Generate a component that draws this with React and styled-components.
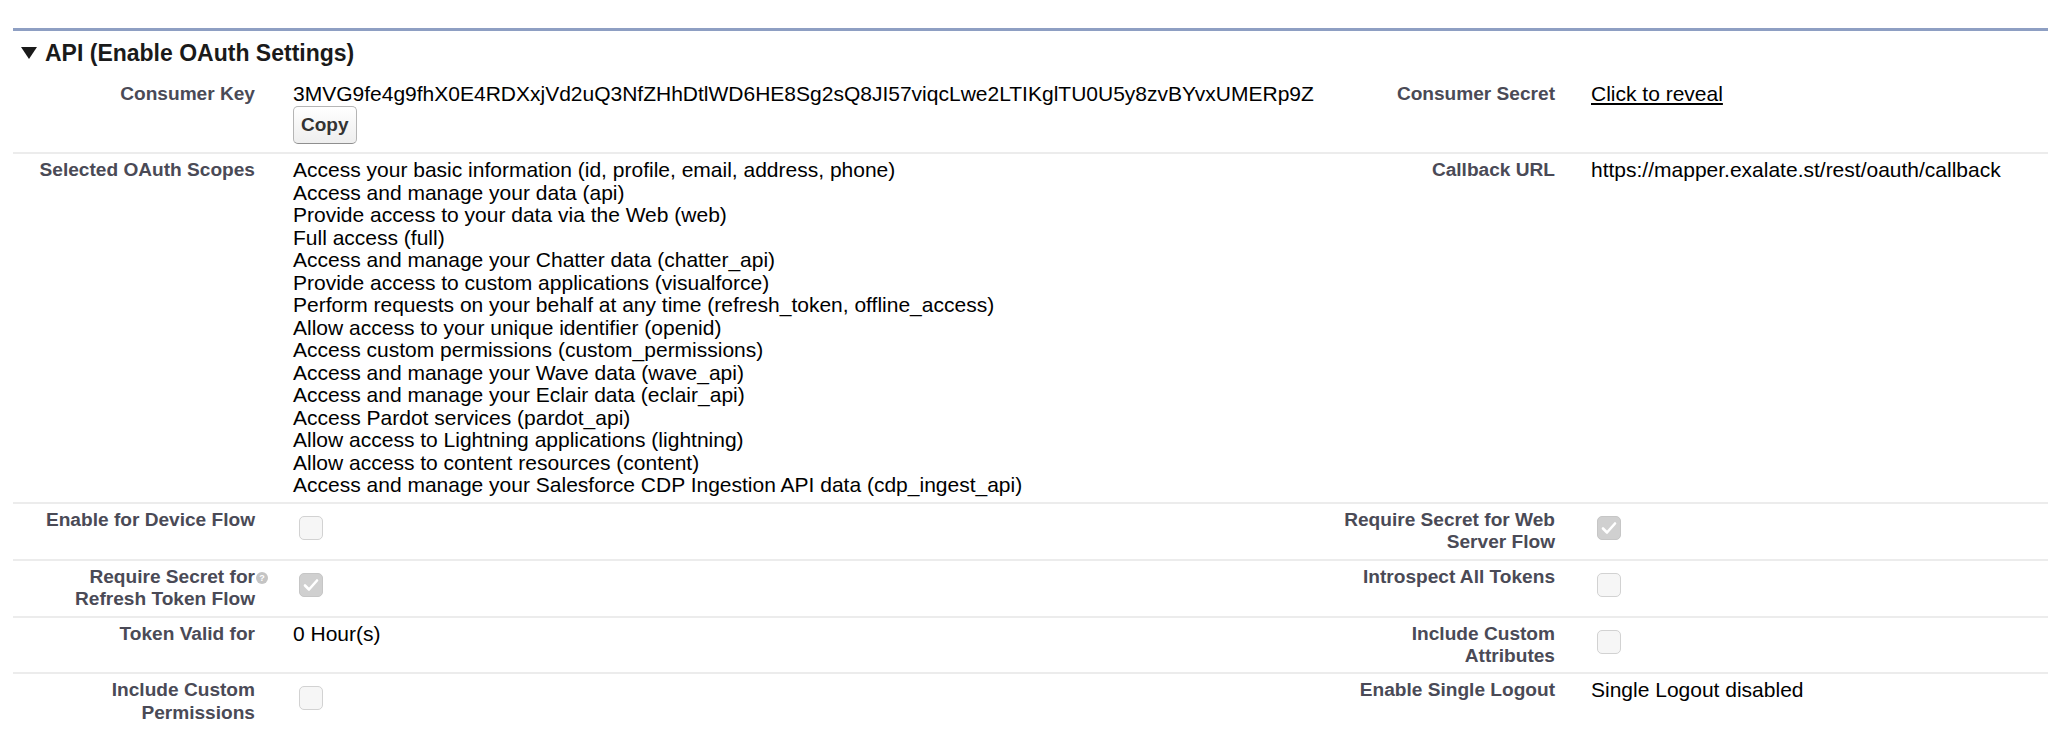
import React from 'react';
import styled, { createGlobalStyle } from 'styled-components';

const GlobalStyle = createGlobalStyle`
  body {
    margin: 0;
    background: #ffffff;
    font-family: "Liberation Sans", Arial, Helvetica, sans-serif;
  }
`;

const Page = styled.div`
  width: 2048px;
  height: 740px;
  padding: 28px 0 0 13px;
  box-sizing: border-box;
  overflow: hidden;
`;

const SubHeader = styled.div`
  display: flex;
  align-items: center;
  border-top: 3px solid #8e9fc3;
  padding: 9px 0 12px 8px;
`;

const Twisty = styled.svg`
  width: 16px;
  height: 12px;
  margin-right: 8px;
  flex: none;
`;

const Title = styled.h3`
  margin: 0;
  font-size: 23px;
  line-height: 26px;
  font-weight: bold;
  color: #1a1a1a;
`;

const Row = styled.div`
  display: grid;
  grid-template-columns: 252px 1048px 252px 1fr;
  border-bottom: 2px solid #ececec;

  &:last-child {
    border-bottom: none;
  }
`;

const Label = styled.div`
  position: relative;
  padding: 5px 10px 5px 12px;
  text-align: right;
  font-size: 19.1px;
  line-height: 22.4px;
  font-weight: bold;
  color: #4a4a56;
`;

const Value = styled.div`
  padding: 5px 0 5px ${p => (p.$right ? '26px' : '28px')};
  font-size: 21px;
  line-height: 22.4px;
  color: #000;
`;

const CopyButton = styled.button`
  display: block;
  margin: 1px 0 3px;
  height: 38px;
  padding: 0 7px;
  font-family: inherit;
  font-size: 19px;
  font-weight: bold;
  color: #333;
  background: linear-gradient(#ffffff, #eeeeee);
  border: 1px solid #b5b5b5;
  border-bottom-color: #8f8f8f;
  border-radius: 5px;
`;

const RevealLink = styled.a`
  color: #000;
  text-decoration: underline;
`;

const Box = styled.span`
  display: flex;
  align-items: center;
  justify-content: center;
  width: 24px;
  height: 24px;
  margin: 7px 0 0 6px;
  box-sizing: border-box;
  border-radius: 5px;
  border: 1px solid ${p => (p.$checked ? '#c6c6c6' : '#d2d2d2')};
  background: ${p => (p.$checked ? '#d0d0d0' : '#f6f6f6')};
`;

const HelpOrb = styled.span`
  position: absolute;
  top: 11px;
  right: -3px;
  width: 12px;
  height: 12px;
  border-radius: 50%;
  background: #c4c4c4;
  color: #fff;
  font-size: 9px;
  line-height: 12px;
  text-align: center;
  font-weight: bold;
`;

const ScopeList = styled.div`
  display: flex;
  flex-direction: column;
  line-height: 22.5px;
`;

const scopes = [
  'Access your basic information (id, profile, email, address, phone)',
  'Access and manage your data (api)',
  'Provide access to your data via the Web (web)',
  'Full access (full)',
  'Access and manage your Chatter data (chatter_api)',
  'Provide access to custom applications (visualforce)',
  'Perform requests on your behalf at any time (refresh_token, offline_access)',
  'Allow access to your unique identifier (openid)',
  'Access custom permissions (custom_permissions)',
  'Access and manage your Wave data (wave_api)',
  'Access and manage your Eclair data (eclair_api)',
  'Access Pardot services (pardot_api)',
  'Allow access to Lightning applications (lightning)',
  'Allow access to content resources (content)',
  'Access and manage your Salesforce CDP Ingestion API data (cdp_ingest_api)',
];

function Checkbox({ checked }) {
  return (
    <Box $checked={checked}>
      {checked && (
        <svg width="16" height="14" viewBox="0 0 16 14">
          <path d="M2 7.5 L6 11.5 L14 2.5" fill="none" stroke="#fff" strokeWidth="2.6" strokeLinecap="round" strokeLinejoin="round" />
        </svg>
      )}
    </Box>
  );
}

export default function App() {
  return (
    <Page>
      <GlobalStyle />
      <SubHeader>
        <Twisty viewBox="0 0 16 12">
          <polygon points="0,0 16,0 8,12" fill="#1a1a1a" />
        </Twisty>
        <Title>API (Enable OAuth Settings)</Title>
      </SubHeader>

      <Row>
        <Label>Consumer Key</Label>
        <Value>
          3MVG9fe4g9fhX0E4RDXxjVd2uQ3NfZHhDtlWD6HE8Sg2sQ8JI57viqcLwe2LTIKglTU0U5y8zvBYvxUMERp9Z
          <CopyButton>Copy</CopyButton>
        </Value>
        <Label>Consumer Secret</Label>
        <Value $right>
          <RevealLink href="#">Click to reveal</RevealLink>
        </Value>
      </Row>

      <Row>
        <Label>Selected OAuth Scopes</Label>
        <Value>
          <ScopeList>
            {scopes.map(s => (
              <span key={s}>{s}</span>
            ))}
          </ScopeList>
        </Value>
        <Label>Callback URL</Label>
        <Value $right>https://mapper.exalate.st/rest/oauth/callback</Value>
      </Row>

      <Row>
        <Label>Enable for Device Flow</Label>
        <Value>
          <Checkbox />
        </Value>
        <Label>Require Secret for Web Server Flow</Label>
        <Value $right>
          <Checkbox checked />
        </Value>
      </Row>

      <Row>
        <Label>
          Require Secret for Refresh Token Flow
          <HelpOrb>?</HelpOrb>
        </Label>
        <Value>
          <Checkbox checked />
        </Value>
        <Label>Introspect All Tokens</Label>
        <Value $right>
          <Checkbox />
        </Value>
      </Row>

      <Row>
        <Label>Token Valid for</Label>
        <Value>0 Hour(s)</Value>
        <Label>Include Custom Attributes</Label>
        <Value $right>
          <Checkbox />
        </Value>
      </Row>

      <Row>
        <Label>Include Custom Permissions</Label>
        <Value>
          <Checkbox />
        </Value>
        <Label>Enable Single Logout</Label>
        <Value $right>Single Logout disabled</Value>
      </Row>
    </Page>
  );
}
